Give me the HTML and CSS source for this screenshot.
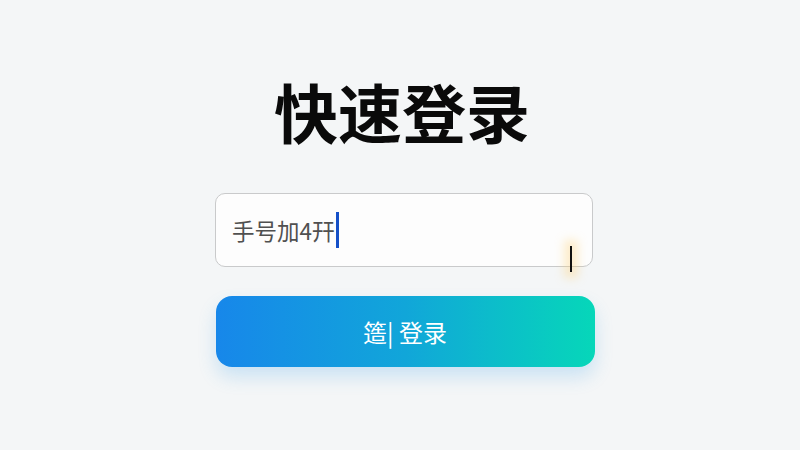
FILE: index.html
```html
<!DOCTYPE html>
<html lang="zh">
<head>
<meta charset="utf-8">
<link rel="stylesheet" href="styles.css">
</head>
<body>
<main class="page">
  <h1 class="title">快速登录</h1>
  <div class="field">
    <span class="value">手号加4幵</span><span class="caret"></span>
    <span class="ibeam"></span>
  </div>
  <button class="submit">簉| 登录</button>
</main>
</body>
</html>
```

FILE: styles.css
```css
html, body {
  margin: 0;
  padding: 0;
  width: 800px;
  height: 450px;
  overflow: hidden;
  background: #f4f6f7;
  font-family: "Noto Sans CJK SC", "Noto Sans", sans-serif;
}
.page {
  display: flex;
  flex-direction: column;
  align-items: center;
  padding-top: 71px;
  padding-left: 10px;
}
.title {
  margin: 0 0 0 -6px;
  font-size: 64px;
  line-height: 78px;
  font-weight: 700;
  color: #0a0a0a;
}
.field {
  position: relative;
  box-sizing: border-box;
  width: 378px;
  height: 74px;
  margin-top: 44px;
  margin-left: -2px;
  border: 1.5px solid #c9cacb;
  border-radius: 10px;
  background: #fdfdfd;
  display: flex;
  align-items: center;
  padding-left: 16px;
}
.value {
  font-size: 22.5px;
  color: #505050;
  line-height: 30px;
}
.caret {
  display: inline-block;
  width: 3px;
  height: 36px;
  background: #1550c8;
  margin-left: 1px;
}
.ibeam {
  position: absolute;
  left: 354px;
  top: 52px;
  width: 2px;
  height: 26px;
  background: #111;
  box-shadow: 0 0 10px 6px rgba(255, 205, 110, 0.35);
}
.submit {
  margin-top: 29px;
  width: 379px;
  height: 71px;
  border: none;
  border-radius: 16px;
  background: linear-gradient(90deg, #1787ea 0%, #11a6d9 50%, #06d7b9 100%);
  color: #ffffff;
  font-family: "Noto Sans CJK SC", "Noto Sans", sans-serif;
  font-size: 24px;
  box-shadow: 0 10px 18px rgba(60, 160, 230, 0.22);
  padding: 0;
}
```
